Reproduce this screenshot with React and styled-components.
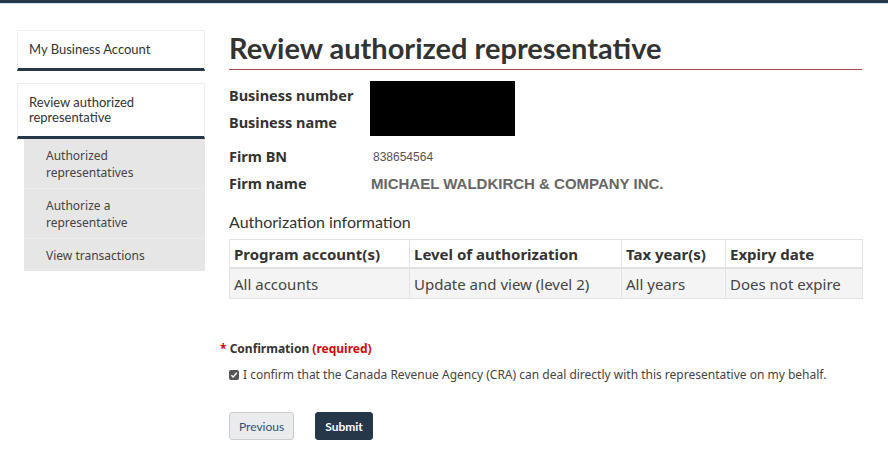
import React from 'react';
import styled, { createGlobalStyle } from 'styled-components';

const GlobalStyle = createGlobalStyle`
  html, body {
    margin: 0;
    padding: 0;
    background: #fff;
  }
  body {
    font-family: 'Noto Sans', sans-serif;
    color: #333;
  }
  * { box-sizing: border-box; }
`;

const sideLinks = ['Authorized representatives', 'Authorize a representative', 'View transactions'];

const columns = [
  { title: 'Program account(s)', value: 'All accounts', width: 180 },
  { title: 'Level of authorization', value: 'Update and view (level 2)', width: 212 },
  { title: 'Tax year(s)', value: 'All years', width: 104 },
  { title: 'Expiry date', value: 'Does not expire', width: 137 },
];

const App = () => (
  <>
    <GlobalStyle />
    <TopBar />
    <Page>
      <Sidebar>
        <NavBox>My Business Account</NavBox>
        <NavBox>Review authorized representative</NavBox>
        <SubMenu>
          {sideLinks.map((link) => (
            <SubItem key={link}>{link}</SubItem>
          ))}
        </SubMenu>
      </Sidebar>
      <Main>
        <Title>Review authorized representative</Title>
        <Business>
          <Labels>
            <Label>Business number</Label>
            <Label>Business name</Label>
          </Labels>
          <Redacted />
        </Business>
        <FirmGrid>
          <Label>Firm BN</Label>
          <FirmBN>838654564</FirmBN>
          <Label>Firm name</Label>
          <FirmName>MICHAEL WALDKIRCH &amp; COMPANY INC.</FirmName>
        </FirmGrid>
        <Subhead>Authorization information</Subhead>
        <Table>
          <colgroup>
            {columns.map((c) => (
              <col key={c.title} style={{ width: c.width }} />
            ))}
          </colgroup>
          <thead>
            <tr>
              {columns.map((c) => (
                <Th key={c.title}>{c.title}</Th>
              ))}
            </tr>
          </thead>
          <tbody>
            <tr>
              {columns.map((c) => (
                <Td key={c.title}>{c.value}</Td>
              ))}
            </tr>
          </tbody>
        </Table>
        <Confirmation>
          <Required>* </Required>Confirmation <Required>(required)</Required>
        </Confirmation>
        <CheckRow>
          <CheckBox>
            <svg width="8" height="8" viewBox="0 0 8 8">
              <path d="M1.3 4.2 L3.2 6 L6.8 1.8" fill="none" stroke="#fff" strokeWidth="1.5" />
            </svg>
          </CheckBox>
          I confirm that the Canada Revenue Agency (CRA) can deal directly with this representative on my behalf.
        </CheckRow>
        <Buttons>
          <Button>Previous</Button>
          <Button $primary>Submit</Button>
        </Buttons>
      </Main>
    </Page>
  </>
);

const TopBar = styled.div`
  height: 4px;
  background: #26374a;
  border-bottom: 1px solid #cfe3ee;
`;

const Page = styled.div`
  display: flex;
  align-items: flex-start;
  gap: 24px;
  padding: 26px 0 0 17px;
`;

const Sidebar = styled.nav`
  width: 188px;
  display: flex;
  flex-direction: column;
  gap: 12px;
`;

const NavBox = styled.div`
  font-family: Lato, sans-serif;
  font-size: 13px;
  line-height: 15px;
  color: #333;
  background: #fff;
  border: 1px solid #eee;
  border-bottom: 3px solid #26374a;
  padding: 11px 11px 11px;
  & + & { margin-bottom: -12px; }
`;

const SubMenu = styled.div`
  margin-left: 7px;
  background: #e6e6e6;
  display: flex;
  flex-direction: column;
`;

const SubItem = styled.div`
  font-size: 12px;
  line-height: 17px;
  color: #444;
  padding: 8px 22px 7px 22px;
  border-bottom: 1px solid #ececec;
  &:last-child { border-bottom: none; }
`;

const Main = styled.main`
  width: 633px;
`;

const Title = styled.h1`
  font-family: Lato, sans-serif;
  font-weight: 700;
  font-size: 29px;
  line-height: 36px;
  color: #333;
  margin: 0;
  padding-bottom: 3px;
  border-bottom: 1px solid #a8474e;
`;

const Business = styled.div`
  display: flex;
  gap: 13px;
  margin-top: 11px;
`;

const Labels = styled.div`
  display: flex;
  flex-direction: column;
  justify-content: center;
  gap: 6px;
  width: 128px;
`;

const Label = styled.div`
  font-weight: 700;
  font-size: 14.5px;
  line-height: 21px;
  color: #333;
`;

const Redacted = styled.div`
  width: 145px;
  height: 55px;
  background: #000;
`;

const FirmGrid = styled.div`
  display: grid;
  grid-template-columns: 142px 1fr;
  align-items: center;
  row-gap: 6px;
  margin-top: 10px;
`;

const FirmBN = styled.div`
  font-family: 'Liberation Sans', Arial, sans-serif;
  font-size: 12px;
  color: #555;
  padding-left: 2px;
`;

const FirmName = styled.div`
  font-family: 'Liberation Sans', Arial, sans-serif;
  font-weight: 700;
  font-size: 15px;
  color: #666;
`;

const Subhead = styled.h2`
  font-family: Lato, sans-serif;
  font-weight: 400;
  font-size: 16px;
  line-height: 20px;
  color: #333;
  margin: 18px 0 7px;
`;

const Table = styled.table`
  width: 633px;
  border-collapse: collapse;
  table-layout: fixed;
  border: 1px solid #e2e2e2;
`;

const Th = styled.th`
  text-align: left;
  font-weight: 700;
  font-size: 15px;
  line-height: 20px;
  color: #333;
  padding: 4px 4px 3px;
  border: 1px solid #e2e2e2;
  border-bottom: 2px solid #e2e2e2;
  background: #fff;
`;

const Td = styled.td`
  font-size: 15px;
  line-height: 20px;
  color: #444;
  padding: 5px 4px 4px;
  border: 1px solid #e2e2e2;
  background: #f4f4f4;
`;

const Confirmation = styled.div`
  margin: 42px 0 0 -9px;
  font-weight: 700;
  font-size: 12px;
  line-height: 16px;
  color: #333;
`;

const Required = styled.span`
  color: #d3080c;
`;

const CheckRow = styled.label`
  display: flex;
  align-items: center;
  gap: 4px;
  margin-top: 10px;
  font-size: 12px;
  line-height: 16px;
  color: #444;
`;

const CheckBox = styled.span`
  width: 10px;
  height: 10px;
  border-radius: 2px;
  background: #555;
  display: inline-flex;
  align-items: center;
  justify-content: center;
`;

const Buttons = styled.div`
  display: flex;
  gap: 21px;
  margin-top: 29px;
`;

const Button = styled.button`
  font-family: Lato, sans-serif;
  font-weight: ${({ $primary }) => ($primary ? 700 : 400)};
  font-size: 12px;
  height: 28px;
  padding: 0 9px;
  border-radius: 3px;
  cursor: pointer;
  color: ${({ $primary }) => ($primary ? '#fff' : '#335075')};
  background: ${({ $primary }) => ($primary ? '#26374a' : '#eaebed')};
  border: 1px solid ${({ $primary }) => ($primary ? '#26374a' : '#ccc')};
`;

export default App;
